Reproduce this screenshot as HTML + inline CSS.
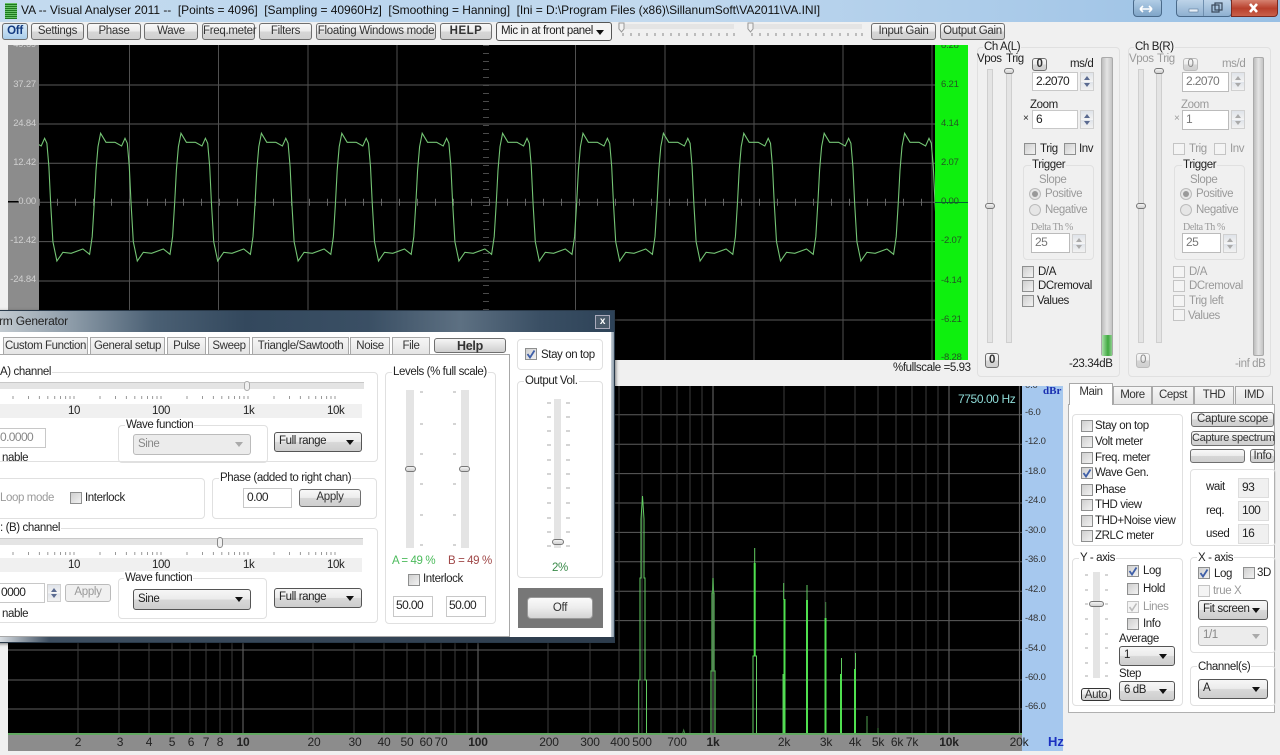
<!DOCTYPE html>
<html><head><meta charset="utf-8"><title>VA</title>
<style>
html,body{margin:0;padding:0;width:1280px;height:755px;overflow:hidden;background:#f0f0f0;font-family:"Liberation Sans",sans-serif;font-size:11.5px;letter-spacing:-.4px;color:#222}
body{filter:blur(.3px)}
div{position:absolute;box-sizing:border-box}
.t{white-space:pre;line-height:14px}
.g1{color:#9a9a9a}
.b{background:linear-gradient(#f8f8f8,#ececec 48%,#d6d6d6 52%,#cfcfcf);border:1px solid #6f6f6f;border-radius:3px;text-align:center;white-space:pre;line-height:15px;color:#333;letter-spacing:-.3px}
.e{background:#fff;border:1px solid #c8c8c8;padding-left:3px;line-height:17px;white-space:pre;font-size:12px;letter-spacing:-.6px}
.c{width:12px;height:12px;border:1px solid #8e8f8f;background:linear-gradient(135deg,#cfcfcf,#f2f2f2)}
.c.d{border-color:#c4c4c4;background:#f4f4f4}
.gr{border:1px solid #e0e0e0;border-radius:4px}
.cb{background:linear-gradient(#f6f6f6,#ebebeb 48%,#d8d8d8 52%,#cdcdcd);border:1px solid #555;border-radius:3px;padding-left:4px;line-height:17px;white-space:pre}
.cb:after{content:"";position:absolute;right:7px;top:7px;border:4px solid transparent;border-top:5px solid #111;border-bottom:0}
.cb.d{border-color:#bbb;color:#888;background:#ececec}
.cb.d:after{border-top-color:#aaa}
.s{width:14px;background:linear-gradient(#dfe3ea,#f2f2f2 47%,#fff 50%,#dfe3ea 53%,#f2f2f2);border:1px solid #d0d0d0}
.s:before{content:"";position:absolute;left:3px;top:3px;border:3px solid transparent;border-bottom:4px solid #5a6a90;border-top:0}
.s:after{content:"";position:absolute;left:3px;bottom:3px;border:3px solid transparent;border-top:4px solid #5a6a90;border-bottom:0}
.s.d:before{border-bottom-color:#aaa}.s.d:after{border-top-color:#aaa}
.tr{background:#e4e4e4;border:1px solid #cfcfcf}
.th{background:linear-gradient(#f3f3f3,#cfcfcf);border:1px solid #777;border-radius:3px}
.tab{background:linear-gradient(#f6f6f6,#e4e4e4);border:1px solid #a8a8a8;border-bottom:0;line-height:17px;text-align:center;white-space:pre;color:#333}
.r{width:12px;height:12px;border-radius:6px;border:1px solid #bbb;background:#e6e6e6}
.lb{text-align:right;width:30px;font-size:9.5px;line-height:10px;color:#d0d0d0;white-space:pre;letter-spacing:-.2px}
.rl{font-size:9.5px;line-height:10px;color:#245524;white-space:pre;letter-spacing:-.2px}
.yl{font-size:9.5px;line-height:12px;color:#333;white-space:pre;letter-spacing:-.2px}
.xl{font-size:12px;line-height:14px;color:#222;white-space:pre;width:40px;text-align:center;top:735px;letter-spacing:-.2px}
.xb{font-weight:bold}
.wl{background:#fff;padding:0 1px}
</style></head><body>

<!-- title bar -->
<div style="left:0;top:0;width:1280px;height:22px;background:linear-gradient(90deg,#c4dbef,#bcd6ee 30%,#c2d9ee 50%,#aecdea 75%,#98bfe4)"></div>
<div style="left:5px;top:3px;width:12px;height:16px;background:repeating-linear-gradient(0deg,#1d7a1d 0 1px,#66c266 1px 2px)"></div>
<div class="t" style="left:21px;top:3px;font-size:12px;letter-spacing:-.04px;color:#111">VA -- Visual Analyser 2011 --  [Points = 4096]  [Sampling = 40960Hz]  [Smoothing = Hanning]  [Ini = D:\Program Files (x86)\SillanumSoft\VA2011\VA.INI]</div>
<div style="left:1133px;top:-2px;width:29px;height:19px;border:1px solid #4a6a8a;border-radius:4px;background:linear-gradient(#b5d0e8,#7fa5c8)"></div>
<div style="left:1176px;top:-2px;width:56px;height:19px;border:1px solid #4a6a8a;border-radius:4px;background:linear-gradient(#c0d6ea,#8fb0d0)"></div>
<div style="left:1203px;top:0;width:1px;height:16px;background:#6f8faf"></div>
<div style="left:1231px;top:-2px;width:47px;height:19px;border:1px solid #7a2a20;border-radius:0 0 4px 0;background:linear-gradient(#d98a78,#b8402c 55%,#c9604a)"></div>

<!-- toolbar -->
<div class="b" style="left:2px;top:23px;width:26px;height:17px;font-weight:bold;color:#123a80;background:linear-gradient(#dcecf8,#a9cdea)">Off</div>
<div class="b" style="left:31px;top:23px;width:53px;height:17px">Settings</div>
<div class="b" style="left:87px;top:23px;width:54px;height:17px">Phase</div>
<div class="b" style="left:144px;top:23px;width:54px;height:17px">Wave</div>
<div class="b" style="left:202px;top:23px;width:53px;height:17px">Freq.meter</div>
<div class="b" style="left:259px;top:23px;width:53px;height:17px">Filters</div>
<div class="b" style="left:316px;top:23px;width:120px;height:17px">Floating Windows mode</div>
<div class="b" style="left:440px;top:23px;width:52px;height:17px;font-weight:bold;letter-spacing:.5px">HELP</div>
<div class="cb" style="left:496px;top:22px;width:116px;height:19px;background:#f4f4f4">Mic in at front panel</div>
<div class="tr" style="left:618px;top:24px;width:116px;height:5px;border:0"></div>
<div class="tr" style="left:747px;top:24px;width:115px;height:5px;border:0"></div>
<div class="b" style="left:871px;top:23px;width:65px;height:17px">Input Gain</div>
<div class="b" style="left:940px;top:23px;width:65px;height:17px">Output Gain</div>

<!-- main graphics -->
<svg style="position:absolute;left:0;top:0" width="1280" height="755">
<defs>
<clipPath id="sc"><rect x="39" y="45" width="896" height="315"/></clipPath>
<path id="w" d="M0 202.3L1.7 170 3.7 146.7 6.3 133.3 11.7 142.3 20.7 142.3 27.3 146 30.7 138.3 33 143.3 35 166.7 36.7 202.3 39 241.7 43 261 49 252.3 57.3 253.3 69 249 75.7 254.3 78.3 236.7 80.4 202.3"/>
</defs>
<rect x="8" y="45" width="31" height="315" fill="#8c8c8c"/>
<rect x="39" y="45" width="896" height="315" fill="#000"/>
<rect x="935" y="45" width="33" height="315" fill="#0ef00e"/>
<rect x="8" y="201" width="11" height="1.5" fill="#000"/>
<path d="M39 85H935M39 124H935M39 163.3H935M39 202.3H935M39 241.6H935M39 281H935M39 320H935" stroke="#5a5a5a" fill="none"/>
<path d="M129.5 45V360M218.5 45V360M308 45V360M397 45V360M575.5 45V360M665 45V360M754 45V360M843 45V360M932 45V360" stroke="#505050" fill="none"/>
<path d="M486 45V360" stroke="#4a4a4a" stroke-width="6" stroke-dasharray="1 7" fill="none"/>
<path d="M39 202.3H935" stroke="#666" stroke-width="7" stroke-dasharray="1 17" fill="none"/>
<path d="M935 202.5H968" stroke="#063" stroke-width="1"/>
<g clip-path="url(#sc)" fill="none" stroke="#74c474" stroke-width="1.1">
<use href="#w" x="13.9"/><use href="#w" x="94.3"/><use href="#w" x="174.7"/><use href="#w" x="255.1"/><use href="#w" x="335.5"/><use href="#w" x="415.9"/><use href="#w" x="496.3"/><use href="#w" x="576.7"/><use href="#w" x="657.1"/><use href="#w" x="737.5"/><use href="#w" x="817.9"/><use href="#w" x="898.3"/>
</g>

<!-- spectrum -->
<rect x="8" y="386" width="1014" height="348" fill="#000"/>
<rect x="8" y="734" width="1014" height="17" fill="#8c8c8c"/>
<rect x="1022" y="386" width="41" height="365" fill="#a6c8ee"/>
<path d="M8 414.8H1022M8 444.2H1022M8 473.6H1022M8 503H1022M8 532.4H1022M8 561.8H1022M8 591.2H1022M8 620.6H1022M8 650H1022M8 680H1022M8 709H1022" stroke="#5e5e5e" fill="none"/>
<path d="M78 386V734M119 386V734M149 386V734M172 386V734M190 386V734M206 386V734M220 386V734M232 386V734M313 386V734M354 386V734M384 386V734M407 386V734M425 386V734M441 386V734M455 386V734M467 386V734M548 386V734M590 386V734M619 386V734M642 386V734M661 386V734M677 386V734M690 386V734M702 386V734M784 386V734M825 386V734M855 386V734M878 386V734M896 386V734M912 386V734M926 386V734M938 386V734" stroke="#3c3c3c" fill="none"/>
<path d="M243 386V734M478 386V734M713 386V734M949 386V734M1019.5 386V734" stroke="#5a5a5a" fill="none" stroke-width="1.2"/>
<g fill="none" stroke="#62cc62" stroke-width="1">
<path d="M638.7 734V680H640V578H641V519L642.5 496 644 519V578H645V680H646.5V734"/>
<path d="M711 734V671H712V593H712.6L713 578 713.5 593H714V671H715V734" stroke-width="1.3" stroke="#52a852"/>
<path d="M754.7 548V563M753 734V656H756.5V734"/>
<path d="M783 734V674"/>
<path d="M783.7 583V600"/>
<path d="M807 585V600"/>
<path d="M825.7 602V618" stroke="#3f7f3f"/>
<path d="M841.5 658V674"/>
<path d="M855.5 653V669"/>
<path d="M867 716V734" stroke="#4f9f4f"/>
<path d="M878 728V734" stroke="#3f7f3f"/>
<path d="M682.5 734L683.7 730 685 734" stroke="#3f7f3f"/>
</g>
<g fill="none" stroke="#4fe04f" stroke-width="2">
<path d="M754.7 563V656M784.5 599V734M807 600V734M825.5 618V734M841 674V734M855 669V734"/>
</g>
<rect x="8" y="733" width="1014" height="2" fill="#62a862"/>
</svg>

<!-- scope labels -->
<div class="lb" style="left:6px;top:40px;clip-path:inset(5px 0 0 0)">49.69</div>
<div class="lb" style="left:6px;top:80px">37.27</div>
<div class="lb" style="left:6px;top:119px">24.84</div>
<div class="lb" style="left:6px;top:158px">12.42</div>
<div class="lb" style="left:6px;top:197px">0.00</div>
<div class="lb" style="left:6px;top:236px">-12.42</div>
<div class="lb" style="left:6px;top:275px">-24.84</div>
<div class="rl" style="left:941px;top:41px;clip-path:inset(4px 0 0 0)">8.28</div>
<div class="rl" style="left:941px;top:80px">6.21</div>
<div class="rl" style="left:941px;top:119px">4.14</div>
<div class="rl" style="left:941px;top:158px">2.07</div>
<div class="rl" style="left:941px;top:197px">0.00</div>
<div class="rl" style="left:941px;top:236px">-2.07</div>
<div class="rl" style="left:941px;top:276px">-4.14</div>
<div class="rl" style="left:941px;top:315px">-6.21</div>
<div class="rl" style="left:941px;top:353px;clip-path:inset(0 0 3px 0)">-8.28</div>
<div class="t" style="left:893px;top:361px">%fullscale =5.93</div>

<!-- spectrum labels -->
<div class="t" style="left:958px;top:392px;color:#8fdcd8;font-size:12px">7750.00 Hz</div>
<div class="t" style="left:1043px;top:384px;color:#1a2fb0;font:bold 11px/14px 'Liberation Serif',serif;letter-spacing:0">dBr</div>
<div class="yl" style="left:1025px;top:380px;clip-path:inset(6px 0 0 0)">0.0</div>
<div class="yl" style="left:1025px;top:407px">-6.0</div>
<div class="yl" style="left:1025px;top:436px">-12.0</div>
<div class="yl" style="left:1025px;top:466px">-18.0</div>
<div class="yl" style="left:1025px;top:495px">-24.0</div>
<div class="yl" style="left:1025px;top:525px">-30.0</div>
<div class="yl" style="left:1025px;top:554px">-36.0</div>
<div class="yl" style="left:1025px;top:584px">-42.0</div>
<div class="yl" style="left:1025px;top:613px">-48.0</div>
<div class="yl" style="left:1025px;top:643px">-54.0</div>
<div class="yl" style="left:1025px;top:672px">-60.0</div>
<div class="yl" style="left:1025px;top:701px">-66.0</div>
<div class="xl" style="left:58px">2</div><div class="xl" style="left:100px">3</div><div class="xl" style="left:129px">4</div><div class="xl" style="left:152px">5</div><div class="xl" style="left:171px">6</div><div class="xl" style="left:186px">7</div><div class="xl" style="left:200px">8</div>
<div class="xl xb" style="left:223px">10</div>
<div class="xl" style="left:294px">20</div><div class="xl" style="left:335px">30</div><div class="xl" style="left:364px">40</div><div class="xl" style="left:387px">50</div><div class="xl" style="left:406px">60</div><div class="xl" style="left:421px">70</div>
<div class="xl xb" style="left:458px">100</div>
<div class="xl" style="left:529px">200</div><div class="xl" style="left:570px">300</div><div class="xl" style="left:600px">400</div><div class="xl" style="left:622px">500</div><div class="xl" style="left:657px">700</div>
<div class="xl xb" style="left:693px">1k</div>
<div class="xl" style="left:764px">2k</div><div class="xl" style="left:806px">3k</div><div class="xl" style="left:835px">4k</div><div class="xl" style="left:858px">5k</div><div class="xl" style="left:877px">6k</div><div class="xl" style="left:892px">7k</div>
<div class="xl xb" style="left:929px">10k</div>
<div class="xl" style="left:999px">20k</div>
<div class="t" style="left:1048px;top:735px;color:#1a2fc0;font-weight:bold;font-size:13px;letter-spacing:0">Hz</div>

<!-- Ch A -->
<div class="gr" style="left:977px;top:47px;width:143px;height:330px"></div>
<div class="t" style="left:983px;top:40px;background:#f0f0f0;padding:0 1px">Ch A(L)</div>
<div class="t" style="left:977px;top:52px">Vpos</div><div class="t" style="left:1006px;top:52px">Trig</div>
<div class="tr" style="left:987px;top:69px;width:6px;height:274px"></div>
<div class="tr" style="left:1006px;top:69px;width:6px;height:274px"></div>
<div class="th" style="left:985px;top:203px;width:10px;height:6px"></div>
<div class="th" style="left:1004px;top:68px;width:10px;height:6px"></div>
<div class="b" style="left:1032px;top:58px;width:15px;height:13px;line-height:11px;font-weight:bold">0</div>
<div class="t" style="left:1070px;top:57px">ms/d</div>
<div class="e" style="left:1032px;top:72px;width:46px;height:19px;background:#fff">2.2070</div>
<div class="s" style="left:1080px;top:72px;height:19px"></div>
<div class="t" style="left:1030px;top:98px">Zoom</div>
<div class="t" style="left:1023px;top:112px;font-size:10px">×</div>
<div class="e" style="left:1032px;top:110px;width:46px;height:19px">6</div>
<div class="s" style="left:1080px;top:110px;height:19px"></div>
<div class="c" style="left:1024px;top:143px"></div><div class="t" style="left:1040px;top:142px">Trig</div>
<div class="c" style="left:1064px;top:143px"></div><div class="t" style="left:1079px;top:142px">Inv</div>
<div class="gr" style="left:1023px;top:165px;width:71px;height:95px"></div>
<div class="t" style="left:1031px;top:158px;background:#f0f0f0;padding:0 1px">Trigger</div>
<div class="t g1" style="left:1039px;top:173px">Slope</div>
<div class="r" style="left:1029px;top:188px"></div><div style="left:1032px;top:191px;width:6px;height:6px;border-radius:3px;background:#999"></div><div class="t g1" style="left:1045px;top:187px">Positive</div>
<div class="r" style="left:1029px;top:204px"></div><div class="t g1" style="left:1045px;top:203px">Negative</div>
<div class="t g1" style="left:1031px;top:221px;font:10px/14px 'Liberation Serif',serif">Delta Th %</div>
<div class="e" style="left:1031px;top:233px;width:39px;height:20px;border-color:#bbb;color:#777">25</div>
<div class="s d" style="left:1072px;top:234px;height:19px"></div>
<div class="c" style="left:1022px;top:266px"></div><div class="t" style="left:1038px;top:265px">D/A</div>
<div class="c" style="left:1022px;top:280px"></div><div class="t" style="left:1038px;top:279px">DCremoval</div>
<div class="c" style="left:1022px;top:295px"></div><div class="t" style="left:1037px;top:294px">Values</div>
<div style="left:1101px;top:57px;width:12px;height:299px;border:1px solid #aaa;border-radius:2px;background:linear-gradient(90deg,#bdbdbd,#e4e4e4,#c4c4c4)"></div>
<div style="left:1102px;top:335px;width:10px;height:21px;background:linear-gradient(90deg,#a8e0a8,#3fa83f 60%,#8fcf8f)"></div>
<div class="t" style="left:1069px;top:357px">-23.34dB</div>
<div class="b" style="left:985px;top:353px;width:14px;height:15px;line-height:13px;font-weight:bold">0</div>

<!-- Ch B -->
<div class="gr" style="left:1128px;top:47px;width:143px;height:330px"></div>
<div class="t" style="left:1134px;top:40px;background:#f0f0f0;padding:0 1px">Ch B(R)</div>
<div class="t g1" style="left:1129px;top:52px">Vpos</div><div class="t g1" style="left:1157px;top:52px">Trig</div>
<div class="tr" style="left:1138px;top:69px;width:6px;height:274px"></div>
<div class="tr" style="left:1156px;top:69px;width:6px;height:274px"></div>
<div class="th" style="left:1136px;top:203px;width:10px;height:6px"></div>
<div class="th" style="left:1154px;top:68px;width:10px;height:6px"></div>
<div class="b" style="left:1183px;top:58px;width:15px;height:13px;line-height:11px;border-color:#bbb;color:#888">0</div>
<div class="t g1" style="left:1222px;top:57px">ms/d</div>
<div class="e" style="left:1182px;top:72px;width:47px;height:20px;border-color:#bbb;color:#777">2.2070</div>
<div class="s d" style="left:1231px;top:72px;height:19px"></div>
<div class="t g1" style="left:1181px;top:98px">Zoom</div>
<div class="t g1" style="left:1174px;top:112px;font-size:10px">×</div>
<div class="e" style="left:1182px;top:110px;width:47px;height:20px;border-color:#bbb;color:#777">1</div>
<div class="s d" style="left:1231px;top:110px;height:19px"></div>
<div class="c d" style="left:1173px;top:143px"></div><div class="t g1" style="left:1189px;top:142px">Trig</div>
<div class="c d" style="left:1214px;top:143px"></div><div class="t g1" style="left:1230px;top:142px">Inv</div>
<div class="gr" style="left:1174px;top:165px;width:71px;height:95px"></div>
<div class="t" style="left:1182px;top:158px;background:#f0f0f0;padding:0 1px">Trigger</div>
<div class="t g1" style="left:1190px;top:173px">Slope</div>
<div class="r" style="left:1180px;top:188px"></div><div style="left:1183px;top:191px;width:6px;height:6px;border-radius:3px;background:#999"></div><div class="t g1" style="left:1196px;top:187px">Positive</div>
<div class="r" style="left:1180px;top:204px"></div><div class="t g1" style="left:1196px;top:203px">Negative</div>
<div class="t g1" style="left:1183px;top:221px;font:10px/14px 'Liberation Serif',serif">Delta Th %</div>
<div class="e" style="left:1182px;top:233px;width:39px;height:20px;border-color:#bbb;color:#777">25</div>
<div class="s d" style="left:1223px;top:234px;height:19px"></div>
<div class="c d" style="left:1173px;top:266px"></div><div class="t g1" style="left:1189px;top:265px">D/A</div>
<div class="c d" style="left:1173px;top:280px"></div><div class="t g1" style="left:1189px;top:279px">DCremoval</div>
<div class="c d" style="left:1173px;top:295px"></div><div class="t g1" style="left:1189px;top:294px">Trig left</div>
<div class="c d" style="left:1173px;top:309px"></div><div class="t g1" style="left:1188px;top:309px">Values</div>
<div style="left:1253px;top:57px;width:11px;height:299px;border:1px solid #aaa;border-radius:2px;background:linear-gradient(90deg,#bdbdbd,#e4e4e4,#c4c4c4)"></div>
<div class="t g1" style="left:1235px;top:357px">-inf dB</div>
<div class="b" style="left:1136px;top:353px;width:14px;height:15px;line-height:13px;border-color:#bbb;color:#888">0</div>

<!-- Bottom right panel -->
<div style="left:1068px;top:404px;width:207px;height:309px;background:#fff;border:1px solid #b0b0b0"></div>
<div class="tab" style="left:1113px;top:386px;width:39px;height:18px">More</div>
<div class="tab" style="left:1152px;top:386px;width:42px;height:18px">Cepst</div>
<div class="tab" style="left:1194px;top:386px;width:40px;height:18px">THD</div>
<div class="tab" style="left:1235px;top:386px;width:38px;height:18px">IMD</div>
<div class="tab" style="left:1069px;top:383px;width:44px;height:22px;background:#fff">Main</div>

<div class="gr" style="left:1072px;top:414px;width:111px;height:132px"></div>
<div class="c" style="left:1081px;top:420px"></div><div class="t" style="left:1095px;top:419px">Stay on top</div>
<div class="c" style="left:1081px;top:436px"></div><div class="t" style="left:1095px;top:435px">Volt meter</div>
<div class="c" style="left:1081px;top:452px"></div><div class="t" style="left:1095px;top:451px">Freq. meter</div>
<div class="c" style="left:1081px;top:467px"></div><div class="t" style="left:1095px;top:466px">Wave Gen.</div>
<div class="c" style="left:1081px;top:484px"></div><div class="t" style="left:1095px;top:483px">Phase</div>
<div class="c" style="left:1081px;top:499px"></div><div class="t" style="left:1095px;top:498px">THD view</div>
<div class="c" style="left:1081px;top:515px"></div><div class="t" style="left:1095px;top:514px">THD+Noise view</div>
<div class="c" style="left:1081px;top:530px"></div><div class="t" style="left:1095px;top:529px">ZRLC meter</div>

<div class="b" style="left:1191px;top:412px;width:83px;height:15px;line-height:13px">Capture scope</div>
<div class="b" style="left:1191px;top:431px;width:84px;height:15px;line-height:13px;font-size:11px">Capture spectrum</div>
<div class="b" style="left:1190px;top:449px;width:55px;height:14px"></div>
<div class="b" style="left:1250px;top:449px;width:25px;height:14px;line-height:12px">Info</div>

<div class="gr" style="left:1190px;top:469px;width:86px;height:77px"></div>
<div class="t" style="left:1206px;top:480px">wait</div><div class="e" style="left:1238px;top:478px;width:31px;height:20px;background:#f0f0f0;border-color:#ddd">93</div>
<div class="t" style="left:1206px;top:504px">req.</div><div class="e" style="left:1238px;top:501px;width:31px;height:20px;background:#f0f0f0;border-color:#ddd">100</div>
<div class="t" style="left:1206px;top:527px">used</div><div class="e" style="left:1238px;top:524px;width:31px;height:20px;background:#f0f0f0;border-color:#ddd">16</div>

<div class="gr" style="left:1072px;top:558px;width:111px;height:148px"></div>
<div class="t wl" style="left:1079px;top:551px">Y - axis</div>
<div class="tr" style="left:1093px;top:572px;width:7px;height:106px;border:0"></div>
<div class="th" style="left:1089px;top:601px;width:15px;height:6px"></div>
<div class="c" style="left:1127px;top:565px"></div><div class="t" style="left:1143px;top:564px">Log</div>
<div class="c" style="left:1127px;top:583px"></div><div class="t" style="left:1143px;top:582px">Hold</div>
<div class="c d" style="left:1127px;top:601px"></div><div class="t g1" style="left:1143px;top:600px">Lines</div>
<div class="c" style="left:1127px;top:618px"></div><div class="t" style="left:1143px;top:617px">Info</div>
<div class="t" style="left:1119px;top:632px">Average</div>
<div class="cb" style="left:1119px;top:646px;width:56px;height:20px">1</div>
<div class="t" style="left:1119px;top:667px">Step</div>
<div class="cb" style="left:1119px;top:681px;width:56px;height:20px">6 dB</div>
<div class="b" style="left:1081px;top:688px;width:30px;height:13px;line-height:12px;border-color:#333">Auto</div>

<div class="gr" style="left:1190px;top:557px;width:86px;height:96px"></div>
<div class="t wl" style="left:1197px;top:551px">X - axis</div>
<div class="c" style="left:1198px;top:567px"></div><div class="t" style="left:1214px;top:567px">Log</div>
<div class="c" style="left:1243px;top:567px"></div><div class="t" style="left:1257px;top:566px">3D</div>
<div class="c d" style="left:1198px;top:585px"></div><div class="t g1" style="left:1213px;top:584px">true X</div>
<div class="cb" style="left:1198px;top:600px;width:70px;height:20px">Fit screen</div>
<div class="cb d" style="left:1198px;top:626px;width:70px;height:20px">1/1</div>

<div class="gr" style="left:1190px;top:666px;width:86px;height:40px"></div>
<div class="t wl" style="left:1197px;top:660px">Channel(s)</div>
<div class="cb" style="left:1198px;top:679px;width:70px;height:20px">A</div>

<!-- Dialog -->
<div style="left:-10px;top:310px;width:625px;height:333px;background:#3b5064;border:1px solid #2a3a4a;box-shadow:1px 1px 3px rgba(0,0,0,.5)"></div>
<div style="left:0;top:311px;width:614px;height:21px;background:linear-gradient(90deg,#c2cad0 0,#8b9aa7 12%,#4b6074 25%,#33485d 40%,#3a4f64 60%,#5d7082 75%,#3a4f64 88%,#2d4257 100%)"></div>
<div class="t" style="left:-1px;top:314px;color:#222;font-size:12px;letter-spacing:-.2px">rm Generator</div>
<div style="left:595px;top:315px;width:15px;height:14px;border:1px solid #aab;background:#4a5a6a;color:#fff;font-size:10px;line-height:11px;text-align:center;font-weight:bold">x</div>
<div style="left:0;top:332px;width:611px;height:305px;background:#fff"></div>
<div style="left:611px;top:332px;width:3px;height:308px;background:linear-gradient(90deg,#c8d0d8,#8a9aa8)"></div>
<div style="left:0;top:637px;width:614px;height:5px;background:linear-gradient(90deg,#d8dde2,#3d4e60 8%,#2d3c4c)"></div>

<div style="left:-3px;top:354px;width:513px;height:283px;border:1px solid #a8a8a8;background:#fff"></div>
<div class="tab" style="left:3px;top:337px;width:85px;height:17px">Custom Function</div>
<div class="tab" style="left:90px;top:337px;width:75px;height:17px">General setup</div>
<div class="tab" style="left:167px;top:337px;width:39px;height:17px">Pulse</div>
<div class="tab" style="left:208px;top:337px;width:42px;height:17px">Sweep</div>
<div class="tab" style="left:252px;top:337px;width:97px;height:17px">Triangle/Sawtooth</div>
<div class="tab" style="left:350px;top:337px;width:40px;height:17px">Noise</div>
<div class="tab" style="left:392px;top:337px;width:38px;height:17px">File</div>
<div class="b" style="left:434px;top:338px;width:72px;height:15px;line-height:14px;font-weight:bold;font-size:12.5px;background:linear-gradient(#f6f6f6,#cfcfcf)">Help</div>

<!-- A channel -->
<div class="gr" style="left:-6px;top:372px;width:384px;height:90px"></div>
<div class="t wl" style="left:-1px;top:365px">A) channel</div>
<div style="left:0;top:382px;width:364px;height:7px;background:#e4e4e4;border-top:1px solid #c8c8c8"></div>
<div class="th" style="left:244px;top:381px;width:6px;height:10px;background:#f0f0f0;border-color:#aaa"></div>
<div style="left:0;top:404px;width:362px;height:14px;background:#f0f0f0"></div>
<div class="t" style="left:68px;top:404px">10</div><div class="t" style="left:152px;top:404px">100</div><div class="t" style="left:243px;top:404px">1k</div><div class="t" style="left:327px;top:404px">10k</div>
<div class="e" style="left:-10px;top:428px;width:56px;height:20px;color:#888;padding-left:9px">0.0000</div>
<div class="t" style="left:2px;top:451px">nable</div>
<div class="gr" style="left:118px;top:425px;width:150px;height:38px"></div>
<div class="t wl" style="left:125px;top:418px">Wave function</div>
<div class="cb d" style="left:133px;top:434px;width:118px;height:21px;line-height:18px">Sine</div>
<div class="cb" style="left:274px;top:432px;width:88px;height:20px">Full range</div>

<!-- loop/phase -->
<div class="gr" style="left:-6px;top:478px;width:211px;height:41px"></div>
<div class="t g1" style="left:0;top:491px">Loop mode</div>
<div class="c" style="left:70px;top:492px"></div><div class="t" style="left:85px;top:491px">Interlock</div>
<div class="gr" style="left:212px;top:478px;width:165px;height:41px"></div>
<div class="t wl" style="left:219px;top:471px">Phase (added to right chan)</div>
<div class="e" style="left:243px;top:488px;width:49px;height:20px">0.00</div>
<div class="b" style="left:299px;top:489px;width:62px;height:18px">Apply</div>

<!-- B channel -->
<div class="gr" style="left:-6px;top:528px;width:384px;height:95px"></div>
<div class="t wl" style="left:-1px;top:521px">: (B) channel</div>
<div style="left:0;top:538px;width:363px;height:7px;background:#e4e4e4;border-top:1px solid #c8c8c8"></div>
<div class="th" style="left:217px;top:537px;width:6px;height:11px;background:#f0f0f0;border-color:#888"></div>
<div style="left:0;top:558px;width:362px;height:14px;background:#f0f0f0"></div>
<div class="t" style="left:68px;top:558px">10</div><div class="t" style="left:152px;top:558px">100</div><div class="t" style="left:243px;top:558px">1k</div><div class="t" style="left:327px;top:558px">10k</div>
<div class="e" style="left:-10px;top:583px;width:55px;height:20px;padding-left:10px">0000</div>
<div class="s" style="left:47px;top:584px;height:18px"></div>
<div class="b" style="left:65px;top:584px;width:46px;height:18px;border-color:#bbb;color:#999;background:#f0f0f0">Apply</div>
<div class="t" style="left:2px;top:607px">nable</div>
<div class="gr" style="left:118px;top:578px;width:149px;height:41px"></div>
<div class="t wl" style="left:124px;top:571px">Wave function</div>
<div class="cb" style="left:133px;top:589px;width:118px;height:21px;line-height:19px">Sine</div>
<div class="cb" style="left:274px;top:588px;width:88px;height:20px">Full range</div>

<!-- Levels -->
<div class="gr" style="left:385px;top:372px;width:111px;height:252px"></div>
<div class="t wl" style="left:392px;top:365px">Levels (% full scale)</div>
<div class="tr" style="left:406px;top:390px;width:8px;height:158px;border:0"></div>
<div class="tr" style="left:461px;top:390px;width:8px;height:158px;border:0"></div>
<div class="th" style="left:405px;top:466px;width:11px;height:6px"></div>
<div class="th" style="left:459px;top:466px;width:11px;height:6px"></div>
<div class="t" style="left:392px;top:554px;color:#4cbb5c">A = 49 %</div>
<div class="t" style="left:448px;top:554px;color:#a04848">B = 49 %</div>
<div class="c" style="left:408px;top:574px"></div><div class="t" style="left:423px;top:572px">Interlock</div>
<div class="e" style="left:393px;top:596px;width:40px;height:21px;padding-left:2px">50.00</div>
<div class="e" style="left:446px;top:596px;width:40px;height:21px;padding-left:2px">50.00</div>

<!-- Right side of dialog -->
<div class="gr" style="left:517px;top:339px;width:86px;height:31px"></div>
<div class="c" style="left:525px;top:348px"></div><div class="t" style="left:541px;top:348px">Stay on top</div>
<div class="gr" style="left:517px;top:381px;width:86px;height:197px"></div>
<div class="t wl" style="left:524px;top:374px">Output Vol.</div>
<div class="tr" style="left:554px;top:399px;width:7px;height:149px;border:0"></div>
<div class="th" style="left:552px;top:539px;width:12px;height:6px"></div>
<div class="t" style="left:552px;top:561px;color:#3a8a4a">2%</div>
<div style="left:518px;top:588px;width:85px;height:40px;background:#777"></div>
<div class="b" style="left:527px;top:597px;width:66px;height:22px;line-height:20px;border-color:#999;border-radius:4px;background:linear-gradient(#fafafa,#ececec 50%,#d4d4d4)">Off</div>

<!-- overlay details -->
<svg style="position:absolute;left:0;top:0" width="1280" height="755" fill="none">
<defs>
<g id="lt" stroke="#999"><path d="M26 0v3M41.500 0v3M52.400 0v3M60.800 0v3M67.700 0v3M73.500 0v3M78.600 0v3M83 0v3M87 0v3"/></g>
<g id="st" stroke="#888"><path d="M5 0v3M13 0v3M21 0v3M29 0v3M37 0v3M45 0v3M53 0v3M61 0v3M69 0v3M77 0v3M85 0v3M93 0v3M101 0v3M109 0v3"/></g>
</defs>
<use href="#lt" x="-13" y="396"/><use href="#lt" x="74" y="396"/><use href="#lt" x="161" y="396"/><use href="#lt" x="248" y="396"/>
<use href="#lt" x="-13" y="552"/><use href="#lt" x="74" y="552"/><use href="#lt" x="161" y="552"/><use href="#lt" x="248" y="552"/>
<use href="#st" x="618" y="33"/><use href="#st" x="747" y="33"/>
<path d="M734 33v3M862 33v3" stroke="#888"/>
<!-- vertical slider ticks -->
<g stroke="#aaa">
<path d="M420 392h3M420 424h3M420 454h3M420 484h3M420 515h3M420 545h3M453 392h3M453 424h3M453 454h3M453 484h3M453 515h3M453 545h3"/>
<path d="M547 403h4M547 417h4M547 431h4M547 445h4M547 460h4M547 474h4M547 488h4M547 503h4M547 518h4M547 532h4M547 546h4M566 403h4M566 417h4M566 431h4M566 445h4M566 460h4M566 474h4M566 488h4M566 503h4M566 518h4M566 532h4M566 546h4"/>
<path d="M1085 575h3M1085 590h3M1085 604h3M1085 619h3M1085 634h3M1085 648h3M1085 663h3M1085 676h3M1105 575h3M1105 590h3M1105 604h3M1105 619h3M1105 634h3M1105 648h3M1105 663h3M1105 676h3"/>
</g>
<!-- check marks -->
<g stroke="#3f5fa8" stroke-width="1.8">
<path d="M527.500 354l2.500 3.500 4.500-7"/>
<path d="M1083.500 473l2.500 3.500 4.500-7"/>
<path d="M1129.500 571l2.500 3.500 4.500-7"/>
<path d="M1200.500 573l2.500 3.500 4.500-7"/>
</g>
<path d="M1129.500 607l2.500 3.500 4.500-7" stroke="#bbb" stroke-width="1.6"/>
<!-- window icons -->
<path d="M1140 9h12M1140 9l3-3M1140 9l3 3M1152 9l-3-3M1152 9l-3 3" stroke="#fff" stroke-width="1.6"/>
<rect x="1189" y="9" width="9" height="3" fill="#e8f0f8" stroke="#5a7a98" stroke-width=".6"/>
<rect x="1212" y="5" width="7" height="7" stroke="#39485a" stroke-width="1.2"/>
<rect x="1215" y="3" width="7" height="7" stroke="#39485a" stroke-width="1.2"/>
<path d="M1250 4l7 8M1257 4l-7 8" stroke="#fff" stroke-width="2.6"/>
<!-- toolbar slider thumbs -->
<path d="M619 23h5v6l-2.500 3-2.500-3zM748 23h5v6l-2.500 3-2.500-3z" fill="#f2f2f2" stroke="#999"/>
</svg>
</body></html>
